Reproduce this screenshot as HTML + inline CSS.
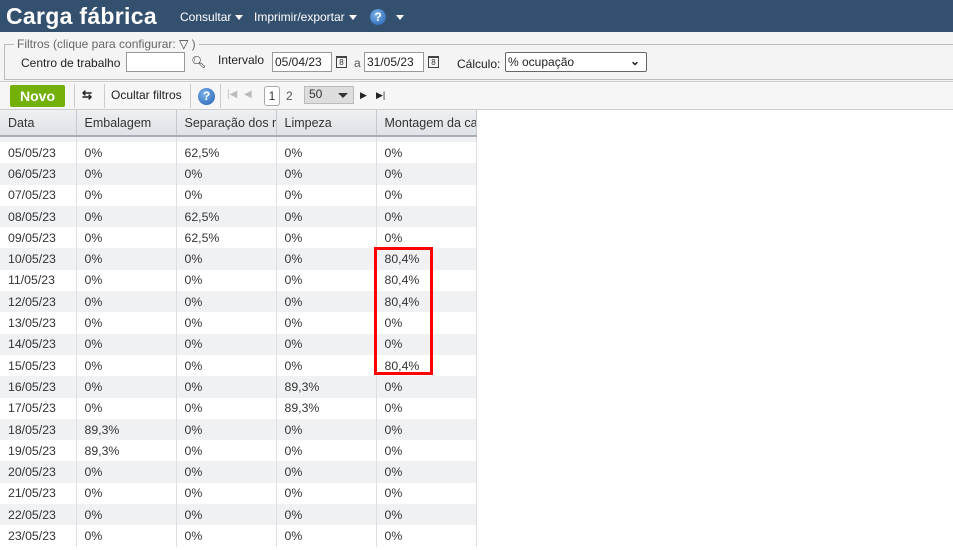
<!DOCTYPE html>
<html><head><meta charset="utf-8"><style>
*{box-sizing:border-box;margin:0;padding:0}
body{width:953px;height:550px;overflow:hidden;background:#fff;font-family:"Liberation Sans",Verdana,sans-serif;font-size:12px;color:#333;position:relative}
.top{position:absolute;left:0;top:0;width:953px;height:32px;background:#34506f}
.title{position:absolute;left:6px;top:3px;font-size:23px;font-weight:bold;color:#fff;letter-spacing:.3px}
.menu{position:absolute;top:10px;color:#fff;font-size:12px}
.tri{display:inline-block;width:0;height:0;border-left:4px solid transparent;border-right:4px solid transparent;border-top:5px solid #fff;vertical-align:middle;margin-left:4px}
.q{position:absolute;width:16px;height:16px;border-radius:50%;background:radial-gradient(circle at 40% 35%,#7db3ec,#1f5cae);color:#fff;font-weight:bold;font-size:12px;text-align:center;line-height:16px}
.filt{position:absolute;left:0;top:32px;width:953px;height:50px;background:#f4f4f4;border-bottom:1px solid #cfcfcf}
.fs{position:absolute;left:4px;top:44px;width:949px;height:36px;border:1px solid #bbb;border-right:none}
.lg{position:absolute;left:14px;top:37px;background:#f4f4f4;padding:0 3px;color:#666;font-size:12px}
.lab{position:absolute;font-size:12px;color:#222}
.inp{position:absolute;height:20px;border:1px solid #999;background:#fff;font-size:12px;padding:2px 2px;color:#222}
.cal{position:absolute;width:11px;height:12px;border:1px solid #444;font-size:8px;text-align:center;line-height:10px;border-top-width:2px}
.tb{position:absolute;left:0;top:82px;width:953px;height:28px;background:#f6f6f6;border-bottom:1px solid #ccc}
.novo{position:absolute;left:10px;top:85px;width:55px;height:22px;background:#73b10a;color:#fff;font-weight:bold;font-size:14px;text-align:center;line-height:22px;border-radius:2px}
.sep{position:absolute;top:84px;width:1px;height:24px;background:#ccc}
table{position:absolute;left:0;top:110px;border-collapse:collapse;width:476px;table-layout:fixed}
th{height:26px;background:linear-gradient(#eef0f3,#dfe2e6);border-right:1px solid #c6c9cd;border-bottom:2px solid #a8adb5;text-align:left;font-weight:normal;padding-left:8px;white-space:nowrap;overflow:hidden;font-size:12.5px;color:#333}
td{height:21.3px;padding-left:8px;border-right:1px solid #dcdee2;white-space:nowrap;font-size:12.3px}
tr.g td{background:#f0f1f3}
.red{position:absolute;left:374px;top:247px;width:59px;height:128px;border:3px solid #f00}
</style></head><body>
<div class="top">
<div class="title">Carga fábrica</div>
<div class="menu" style="left:180px">Consultar<span class="tri"></span></div>
<div class="menu" style="left:254px">Imprimir/exportar<span class="tri"></span></div>
<div class="q" style="left:370px;top:9px">?</div>
<div class="menu" style="left:392px"><span class="tri"></span></div>
</div>
<div class="filt"></div>
<div class="fs"></div>
<div class="lg">Filtros (clique para configurar: <span style="color:#333">▽</span> )</div>
<div class="lab" style="left:21px;top:56px">Centro de trabalho</div>
<div class="inp" style="left:126px;top:52px;width:59px"></div>
<div class="lab" style="left:191px;top:55px">🔍︎</div>
<div class="lab" style="left:218px;top:53px">Intervalo</div>
<div class="inp" style="left:272px;top:52px;width:60px">05/04/23</div>
<div class="cal" style="left:336px;top:56px">8</div>
<div class="lab" style="left:354px;top:56px;color:#555">a</div>
<div class="inp" style="left:364px;top:52px;width:60px">31/05/23</div>
<div class="cal" style="left:428px;top:56px">8</div>
<div class="lab" style="left:457px;top:57px">Cálculo:</div>
<div class="inp" style="left:505px;top:52px;width:142px;border-color:#666;border-radius:2px">% ocupação<span style="position:absolute;right:6px;top:1px;font-weight:bold">⌄</span></div>
<div class="tb"></div>
<div class="novo">Novo</div>
<div class="sep" style="left:74px"></div>
<div class="lab" style="left:82px;top:88px;font-weight:bold">⇆</div>
<div class="sep" style="left:104px"></div>
<div class="lab" style="left:111px;top:88px">Ocultar filtros</div>
<div class="sep" style="left:190px"></div>
<div class="q" style="left:198px;top:88px;width:17px;height:17px">?</div>
<div class="sep" style="left:220px"></div>
<div class="lab" style="left:227px;top:89px;color:#bbb;font-size:10px">|◀</div>
<div class="lab" style="left:244px;top:89px;color:#bbb;font-size:10px">◀</div>
<div style="position:absolute;left:264px;top:86px;width:16px;height:20px;border:1px solid #aaa;border-radius:3px;background:#fff;text-align:center;line-height:18px;font-size:12px">1</div>
<div class="lab" style="left:286px;top:89px;color:#555">2</div>
<div style="position:absolute;left:304px;top:86px;width:50px;height:18px;background:#ddd;border:1px solid #bbb;font-size:12px;padding-left:4px;line-height:14px">50<span style="position:absolute;right:5px;top:6px;border-left:5px solid transparent;border-right:5px solid transparent;border-top:5px solid #333"></span></div>
<div class="lab" style="left:360px;top:90px;font-size:9px">▶</div>
<div class="lab" style="left:376px;top:90px;font-size:9px">▶|</div>
<table>
<colgroup><col style="width:76px"><col style="width:100px"><col style="width:100px"><col style="width:100px"><col style="width:100px"></colgroup>
<tr><th>Data</th><th>Embalagem</th><th>Separação dos m</th><th>Limpeza</th><th>Montagem da car</th></tr>
<tr class="g"><td style="height:6px"></td><td style="height:6px"></td><td style="height:6px"></td><td style="height:6px"></td><td style="height:6px"></td></tr>
<tr><td>05/05/23</td><td>0%</td><td>62,5%</td><td>0%</td><td>0%</td></tr>
<tr class="g"><td>06/05/23</td><td>0%</td><td>0%</td><td>0%</td><td>0%</td></tr>
<tr><td>07/05/23</td><td>0%</td><td>0%</td><td>0%</td><td>0%</td></tr>
<tr class="g"><td>08/05/23</td><td>0%</td><td>62,5%</td><td>0%</td><td>0%</td></tr>
<tr><td>09/05/23</td><td>0%</td><td>62,5%</td><td>0%</td><td>0%</td></tr>
<tr class="g"><td>10/05/23</td><td>0%</td><td>0%</td><td>0%</td><td>80,4%</td></tr>
<tr><td>11/05/23</td><td>0%</td><td>0%</td><td>0%</td><td>80,4%</td></tr>
<tr class="g"><td>12/05/23</td><td>0%</td><td>0%</td><td>0%</td><td>80,4%</td></tr>
<tr><td>13/05/23</td><td>0%</td><td>0%</td><td>0%</td><td>0%</td></tr>
<tr class="g"><td>14/05/23</td><td>0%</td><td>0%</td><td>0%</td><td>0%</td></tr>
<tr><td>15/05/23</td><td>0%</td><td>0%</td><td>0%</td><td>80,4%</td></tr>
<tr class="g"><td>16/05/23</td><td>0%</td><td>0%</td><td>89,3%</td><td>0%</td></tr>
<tr><td>17/05/23</td><td>0%</td><td>0%</td><td>89,3%</td><td>0%</td></tr>
<tr class="g"><td>18/05/23</td><td>89,3%</td><td>0%</td><td>0%</td><td>0%</td></tr>
<tr><td>19/05/23</td><td>89,3%</td><td>0%</td><td>0%</td><td>0%</td></tr>
<tr class="g"><td>20/05/23</td><td>0%</td><td>0%</td><td>0%</td><td>0%</td></tr>
<tr><td>21/05/23</td><td>0%</td><td>0%</td><td>0%</td><td>0%</td></tr>
<tr class="g"><td>22/05/23</td><td>0%</td><td>0%</td><td>0%</td><td>0%</td></tr>
<tr><td>23/05/23</td><td>0%</td><td>0%</td><td>0%</td><td>0%</td></tr>
</table>
<div class="red"></div>
</body></html>
